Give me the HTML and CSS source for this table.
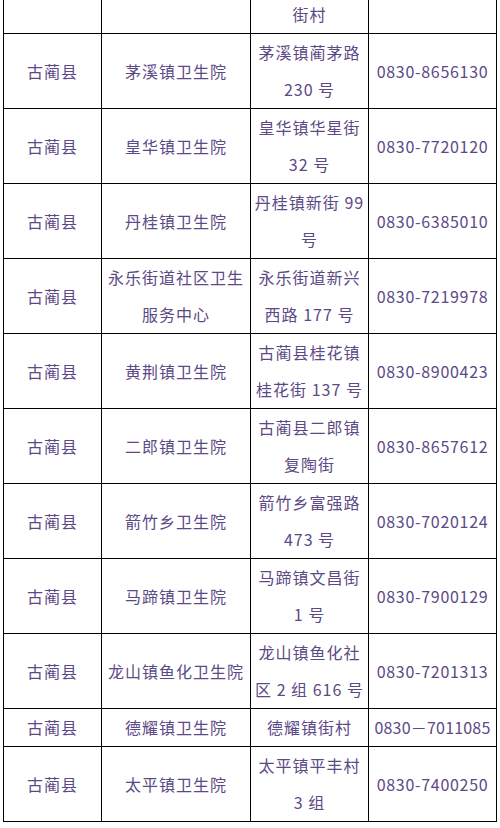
FILE: index.html
```html
<!DOCTYPE html>
<html lang="zh-CN">
<head>
<meta charset="utf-8">
<title>古蔺县卫生院</title>
<link rel="stylesheet" href="styles.css">
</head>
<body>
<div class="page">
<table class="list">
  <colgroup>
    <col class="c1"><col class="c2"><col class="c3"><col class="c4">
  </colgroup>
  <tbody>
    <tr class="cut"><td></td><td></td><td>&nbsp;<br>街村</td><td></td></tr>
    <tr><td>古蔺县</td><td>茅溪镇卫生院</td><td>茅溪镇蔺茅路<br>230 号</td><td class="tel">0830-8656130</td></tr>
    <tr><td>古蔺县</td><td>皇华镇卫生院</td><td>皇华镇华星街<br>32 号</td><td class="tel">0830-7720120</td></tr>
    <tr><td>古蔺县</td><td>丹桂镇卫生院</td><td>丹桂镇新街 99<br>号</td><td class="tel">0830-6385010</td></tr>
    <tr><td>古蔺县</td><td>永乐街道社区卫生<br>服务中心</td><td>永乐街道新兴<br>西路 177 号</td><td class="tel">0830-7219978</td></tr>
    <tr><td>古蔺县</td><td>黄荆镇卫生院</td><td>古蔺县桂花镇<br>桂花街 137 号</td><td class="tel">0830-8900423</td></tr>
    <tr><td>古蔺县</td><td>二郎镇卫生院</td><td>古蔺县二郎镇<br>复陶街</td><td class="tel">0830-8657612</td></tr>
    <tr><td>古蔺县</td><td>箭竹乡卫生院</td><td>箭竹乡富强路<br>473 号</td><td class="tel">0830-7020124</td></tr>
    <tr><td>古蔺县</td><td>马蹄镇卫生院</td><td>马蹄镇文昌街<br>1 号</td><td class="tel">0830-7900129</td></tr>
    <tr><td>古蔺县</td><td>龙山镇鱼化卫生院</td><td>龙山镇鱼化社<br>区 2 组 616 号</td><td class="tel">0830-7201313</td></tr>
    <tr><td>古蔺县</td><td>德耀镇卫生院</td><td>德耀镇街村</td><td class="tel tight">0830－7011085</td></tr>
    <tr><td>古蔺县</td><td>太平镇卫生院</td><td>太平镇平丰村<br>3 组</td><td class="tel">0830-7400250</td></tr>
  </tbody>
</table>
</div>
</body>
</html>
```
FILE: styles.css
```css
html, body {
  margin: 0;
  padding: 0;
  background: #ffffff;
}

.page {
  padding-left: 3px;
  overflow: hidden;
  height: 828px;
}

.list {
  margin-top: -42px;
  border-collapse: collapse;
  table-layout: fixed;
  width: 493px;
  font-family: "Noto Sans CJK SC", "Noto Sans", sans-serif;
  font-size: 16px;
  color: #5c4a86;
}

.c1 { width: 98px; }
.c2 { width: 149px; }
.c3 { width: 118px; }
.c4 { width: 128px; }

.list td {
  border: 1px solid #000000;
  padding: 0 2px;
  line-height: 37px;
  text-align: center;
  vertical-align: middle;
  letter-spacing: 1px;
  white-space: nowrap;
  overflow: hidden;
}

.list td.tel {
  letter-spacing: 0.7px;
}

.list td.tight {
  letter-spacing: 0.2px;
}
```
